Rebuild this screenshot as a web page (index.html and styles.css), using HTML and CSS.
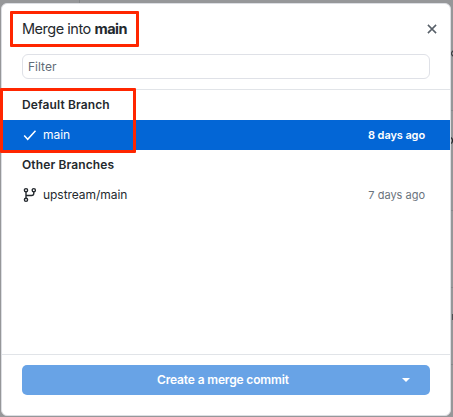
FILE: index.html
```html
<!DOCTYPE html>
<html lang="en">
<head>
<meta charset="utf-8">
<title>Merge into main</title>
<link rel="stylesheet" href="styles.css">
</head>
<body>
<div class="backdrop">
  <span class="seam seam-top"></span>
  <span class="seam seam-a"></span>
  <span class="seam seam-b"></span>
  <span class="seam seam-c"></span>
  <span class="seam seam-d"></span>
  <span class="peek peek-a"></span>
  <span class="peek peek-b"></span>
  <span class="peek peek-c"></span>
</div>
<main class="dialog">
  <header class="header">
    <div class="title-row">
      <h1 class="title">Merge into <strong>main</strong></h1>
      <svg class="close" width="10" height="10" viewBox="0 0 10 10"><path d="M.9.9l8.2 8.2M9.1.9L.9 9.1"/></svg>
    </div>
    <div class="filter">Filter</div>
  </header>
  <section class="list">
    <h2 class="group">Default Branch</h2>
    <div class="row selected">
      <svg class="icon" width="16" height="16" viewBox="0 0 16 16"><path class="check" d="M2.2 8.6l3.5 3.7L13.5 3.8"/></svg>
      <span class="name">main</span>
      <span class="time">8 days ago</span>
    </div>
    <h2 class="group">Other Branches</h2>
    <div class="row">
      <svg class="icon" width="16" height="16" viewBox="0 0 16 16"><g class="branch"><circle cx="4" cy="3.2" r="1.6"/><circle cx="11.8" cy="3.2" r="1.6"/><circle cx="4" cy="12.8" r="1.6"/><path d="M4 4.8v6.4M11.8 4.8v1.4q0 2.3-2.3 2.3H4"/></g></svg>
      <span class="name">upstream/main</span>
      <span class="time">7 days ago</span>
    </div>
  </section>
  <footer class="footer">
    <div class="button">
      <span class="button-label">Create a merge commit</span>
      <span class="button-menu"><svg width="8" height="4" viewBox="0 0 8 4"><path d="M0 0h8L4 4z"/></svg></span>
    </div>
  </footer>
</main>
<div class="marker marker-title"></div>
<div class="marker marker-branch"></div>
</body>
</html>
```

FILE: styles.css
```css
* { box-sizing: border-box; }

body {
  margin: 0;
  width: 453px;
  height: 417px;
  padding: 3px 2px 1px 1px;
  position: relative;
  overflow: hidden;
  background: #969799;
  font-family: Inter, "Liberation Sans", sans-serif;
  font-size: 12px;
  color: #24292e;
}

h1, h2 { margin: 0; font-weight: 400; }

.backdrop { position: absolute; inset: 0; overflow: hidden; }
.seam { position: absolute; right: 0; width: 2px; height: 1px; background: #85878a; }
.seam-top { left: 79px; top: 0; width: 1px; height: 3px; }
.seam-a { top: 110px; }
.seam-b { top: 210px; }
.seam-c { top: 287px; }
.seam-d { top: 364px; }
.peek { position: absolute; }
.peek-a { left: 451px; top: 50px; width: 7px; height: 7px; border: 1.5px solid #1c1f23; border-radius: 50%; }
.peek-b { left: 447px; top: 137px; width: 6px; height: 7px; border: 1.5px solid #1c1f23; border-radius: 50%; }
.peek-c { left: 452px; top: 314px; width: 1px; height: 6px; background: #4d4f52; }

.dialog {
  position: relative;
  width: 450px;
  height: 413px;
  display: flex;
  flex-direction: column;
  border: 1px solid #dcdee3;
  border-radius: 6px;
  background: #fff;
  overflow: hidden;
}

.header { height: 86px; padding: 10px 20px 0; border-bottom: 1px solid #e1e4e8; }
.title-row { height: 31px; display: flex; align-items: center; justify-content: space-between; }
.title { padding-bottom: 1px; font-size: 14.5px; line-height: 20px; letter-spacing: -0.48px; white-space: nowrap; }
.title strong { font-weight: 700; }
.close { margin: 0 -7px 2px 0; fill: none; stroke: #586069; stroke-width: 1.5; }
.filter {
  height: 25px;
  margin-top: 9px;
  padding-left: 5px;
  display: flex;
  align-items: center;
  border: 1px solid #dfe1e7;
  border-radius: 6px;
  color: #626b77;
}

.list { flex: 1; }
.group { height: 30px; padding-left: 20px; font-size: 12px; line-height: 30px; font-weight: 600; letter-spacing: 0.12px; }
.row { height: 30px; display: flex; align-items: center; padding: 0 25px 0 20px; }
.icon { flex: none; margin-right: 5px; }
.name { flex: 1; padding-bottom: 2px; letter-spacing: -0.05px; }
.time { font-size: 11px; color: #6a737d; }
.selected { background: #0366d6; color: #fff; }
.selected .time { color: #fff; font-weight: 600; letter-spacing: -0.1px; }
.check { fill: none; stroke: #fff; stroke-width: 1.5; }
.branch { fill: none; stroke: #24292e; stroke-width: 1.4; }

.footer { height: 61px; padding: 10px 20px; border-top: 1px solid #e1e4e8; }
.button { width: 408px; height: 30px; display: flex; border-radius: 5px; background: #68a3e6; color: #fff; }
.button-label { width: 359px; padding-left: 135px; line-height: 30px; font-weight: 600; letter-spacing: -0.15px; white-space: nowrap; }
.button-menu { width: 49px; display: flex; align-items: center; justify-content: center; }
.button-menu svg { fill: #fff; }

.marker { position: absolute; border: 3px solid #ff2600; border-radius: 1px; }
.marker-title { left: 10px; top: 11px; width: 129px; height: 36px; }
.marker-branch { left: 0; top: 88px; width: 136px; height: 65px; }
```
